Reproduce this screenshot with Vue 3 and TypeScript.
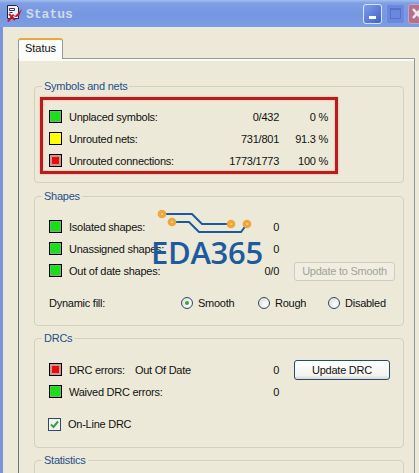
<script setup lang="ts">
interface Row { color: string; label: string; value: string; pct: string }
const nets: Row[] = [
  { color: 'green', label: 'Unplaced symbols:', value: '0/432', pct: '0 %' },
  { color: 'yellow', label: 'Unrouted nets:', value: '731/801', pct: '91.3 %' },
  { color: 'red', label: 'Unrouted connections:', value: '1773/1773', pct: '100 %' },
]
const shapes = [
  { label: 'Isolated shapes:', value: '0' },
  { label: 'Unassigned shapes:', value: '0' },
  { label: 'Out of date shapes:', value: '0/0' },
]
const fills = [
  { label: 'Smooth', on: true, w: 77 },
  { label: 'Rough', on: false, w: 70 },
  { label: 'Disabled', on: false, w: 70 },
]
</script>

<template>
  <div class="window">
    <header class="titlebar">
      <svg class="appicon" width="17" height="17" viewBox="0 0 17 17">
        <path d="M1.5 .5h9l2 2v11h-11z" fill="#f2f2f6" stroke="#23234a" />
        <path d="M3.5 3.500h5v2h-5zM3.500 7.500h3" fill="none" stroke="#35356a" />
        <path d="M1 16l6-7 2 2 7-7-3 7-3 1-3-1-4 6z" fill="#c2162a" />
        <path d="M3 9l6 6" stroke="#c2162a" stroke-width="2" />
      </svg>
      <span class="title">Status</span>
      <div class="winbtns">
        <span class="wb min"><i></i></span>
        <span class="wb max"><i></i></span>
        <span class="wb close"><svg width="11" height="14" viewBox="0 0 11 14"><path d="M1 2l8 9M9 2l-8 9" stroke="#f2e6ea" stroke-width="2.6" fill="none" /></svg></span>
      </div>
    </header>

    <main class="client">
      <div class="tab">Status</div>
      <section class="page">
        <fieldset class="group g1">
          <legend>Symbols and nets</legend>
          <div class="highlight">
            <div v-for="r in nets" :key="r.label" class="row">
              <span class="led" :class="r.color"></span>
              <span class="label">{{ r.label }}</span>
              <span class="value">{{ r.value }}</span>
              <span class="pct">{{ r.pct }}</span>
            </div>
          </div>
        </fieldset>

        <fieldset class="group g2">
          <legend>Shapes</legend>
          <div v-for="s in shapes" :key="s.label" class="row">
            <span class="led green"></span>
            <span class="label">{{ s.label }}</span>
            <span class="value">{{ s.value }}</span>
            <button v-if="s.value === '0/0'" class="btn disabled" disabled>Update to Smooth</button>
          </div>
          <div class="fillrow">
            <span class="filllabel">Dynamic fill:</span>
            <label v-for="f in fills" :key="f.label" class="radio" :style="{ width: f.w + 'px' }">
              <span class="dot" :class="{ on: f.on }"></span>{{ f.label }}
            </label>
          </div>
          <div class="mark">
            <svg class="traces" width="100" height="32" viewBox="0 0 100 32">
              <path d="M9 6H39L49 16H78M19 14H36L46 24H88L94 16" fill="none" stroke="#1a5a9e" stroke-width="2" />
              <g fill="#f8eed6" stroke="#f0a63c" stroke-width="3.500">
                <circle cx="9" cy="6" r="2.600" />
                <circle cx="19" cy="14" r="2.600" />
                <circle cx="78" cy="16" r="2.600" />
                <circle cx="94" cy="16" r="2.600" />
              </g>
            </svg>
            <span class="markname">EDA365</span>
          </div>
        </fieldset>

        <fieldset class="group g3">
          <legend>DRCs</legend>
          <div class="row">
            <span class="led red"></span>
            <span class="label drclabel"><span>DRC errors:</span><span>Out Of Date</span></span>
            <span class="value">0</span>
            <button class="btn">Update DRC</button>
          </div>
          <div class="row">
            <span class="led green"></span>
            <span class="label">Waived DRC errors:</span>
            <span class="value">0</span>
          </div>
          <label class="check">
            <span class="box">
              <svg width="9" height="9" viewBox="0 0 9 9"><path d="M1 4.5l2.500 2.500L8 1.500" fill="none" stroke="#3f9a46" stroke-width="2" /></svg>
            </span>
            On-Line DRC
          </label>
        </fieldset>

        <fieldset class="group g4">
          <legend>Statistics</legend>
        </fieldset>
      </section>
    </main>
  </div>
</template>

<style>
html, body { margin: 0; padding: 0; overflow: hidden; }
</style>

<style scoped>
.window {
  width: 419px;
  height: 473px;
  overflow: hidden;
  display: flex;
  flex-direction: column;
  background: #ece9d8;
  font-family: "Liberation Sans", Arial, sans-serif;
  font-size: 11px;
  letter-spacing: -0.25px;
  color: #111;
}
.titlebar {
  flex: none;
  height: 27px;
  box-sizing: border-box;
  display: flex;
  align-items: center;
  padding: 0 0 0 6px;
  background: linear-gradient(#a5bdee 0, #7f9fe4 12%, #7596e0 55%, #7c9ee6 100%);
}
.appicon { flex: none; }
.title {
  margin-left: 3px;
  padding-top: 2px;
  font-family: "Liberation Mono", monospace;
  font-weight: 700;
  font-size: 13px;
  letter-spacing: 0;
  color: #d0dae8;
}
.winbtns { margin-left: auto; display: flex; gap: 3px; margin-right: -8px; }
.wb {
  width: 19px;
  height: 20px;
  box-sizing: border-box;
  border-radius: 3px;
  display: flex;
  align-items: center;
  justify-content: center;
}
.wb.min { background: linear-gradient(135deg, #7f9cec, #3f63c8); border: 1px solid #dbe4f8; margin-right: 1px; }
.wb.min i { width: 7px; height: 3px; background: #fff; margin-top: 7px; margin-right: 1px; }
.wb.max { background: #6a88de; border: 1px solid #7f9ce4; }
.wb.max i { width: 9px; height: 8px; border: 1px solid #5673c8; border-top-width: 2px; }
.wb.close { background: #b4708e; border: 1px solid #c9a4bc; justify-content: flex-start; padding-left: 3px; }

.client {
  flex: 1;
  min-height: 0;
  display: flex;
  flex-direction: column;
  border-left: 3px solid #7b93dc;
  padding: 11px 4px 0 15px;
}
.tab {
  flex: none;
  align-self: flex-start;
  width: 45px;
  height: 21px;
  box-sizing: border-box;
  background: #fcfcfa;
  border: 1px solid #919b9c;
  border-top: 2px solid #e8a93a;
  border-bottom: none;
  border-radius: 3px 3px 0 0;
  text-align: center;
  line-height: 17px;
  letter-spacing: 0;
  margin-bottom: -1px;
  position: relative;
  z-index: 1;
}
.page {
  flex: 1;
  min-height: 0;
  overflow: hidden;
  border: 1px solid #919b9c;
  border-left-color: #70757a;
  border-top-color: #9a9a9a;
  border-bottom: none;
  box-shadow: inset 0 2px 0 #fbfbf8;
  padding: 21px 10px 0 15px;
  display: flex;
  flex-direction: column;
}
.group {
  flex: none;
  margin: 0;
  padding: 0;
  min-width: 0;
  box-sizing: border-box;
  border: 1px solid #d4d0c0;
  border-radius: 4px;
  position: relative;
}
.group legend {
  margin-left: 7px;
  padding: 0 2px;
  font-size: 11px;
  line-height: 13px;
  color: #1f4f8a;
}
.g1 { height: 103px; margin-bottom: 7px; }
.g2 { height: 136px; margin-bottom: 6px; padding-top: 12px; }
.g3 { height: 116px; margin-bottom: 6px; padding-top: 13px; }
.g4 { height: 60px; }
.highlight {
  margin: 4px 65px 0 5px;
  height: 77px;
  box-sizing: border-box;
  border: 3px solid #b81c1c;
  box-shadow: 0 0 2px #e8a090, inset 0 0 2px #e8a090;
  padding: 5px 0 0 6px;
}
.g2 .row, .g3 .row { padding-left: 14px; }
.row {
  height: 22px;
  display: flex;
  align-items: center;
}
.led {
  flex: none;
  width: 13px;
  height: 13px;
  box-sizing: border-box;
  border: 1px solid #000;
  margin-right: 7px;
}
.led.green { background: #17e017; box-shadow: inset -1px -1px 0 #86a886, inset 1px 1px 0 #5fbf5f; }
.led.yellow { background: #ffff00; }
.led.red { background: #ee0808; box-shadow: inset 0 0 0 2px #c49a96; }
.label { flex: none; width: 131px; white-space: nowrap; padding-top: 1px; }
.value { flex: none; width: 79px; text-align: right; white-space: nowrap; padding-top: 1px; }
.pct { flex: none; width: 49px; text-align: right; white-space: nowrap; padding-top: 1px; }
.drclabel { display: flex; gap: 10px; }
.btn {
  flex: none;
  box-sizing: border-box;
  font: inherit;
  letter-spacing: inherit;
  color: #111;
  background: linear-gradient(#ffffff, #f4f3ee 80%, #dcd8cc);
  border: 1px solid #234a78;
  border-radius: 3px;
  padding: 0;
  margin: 2px 0 0 15px;
}
.g3 .btn { width: 96px; height: 20px; }
.btn.disabled {
  width: 101px;
  height: 19px;
  color: #a5a292;
  background: #f0eee2;
  border-color: #cfccbc;
}
.fillrow {
  display: flex;
  align-items: center;
  height: 22px;
  margin-top: 11px;
  padding-left: 14px;
}
.filllabel { width: 132px; flex: none; }
.radio { display: flex; align-items: center; flex: none; }
.dot {
  width: 12px;
  height: 12px;
  box-sizing: border-box;
  border: 1px solid #2b4a6c;
  border-radius: 50%;
  margin-right: 5px;
  background: radial-gradient(circle at 65% 65%, #fff, #dcd8cc);
  position: relative;
  flex: none;
}
.dot.on::after {
  content: "";
  position: absolute;
  left: 3px;
  top: 3px;
  width: 4px;
  height: 4px;
  border-radius: 50%;
  background: #3aa23a;
}
.check {
  display: flex;
  align-items: center;
  margin: 15px 0 0 13px;
  gap: 7px;
  height: 14px;
}
.box {
  width: 13px;
  height: 13px;
  box-sizing: border-box;
  border: 1px solid #2b4a6c;
  background: #f4f4ee;
  display: flex;
  align-items: center;
  justify-content: center;
}
.mark {
  position: absolute;
  left: 118px;
  top: 5px;
  width: 112px;
  pointer-events: none;
}
.traces { display: block; }
.markname {
  position: absolute;
  left: -2px;
  top: 28px;
  font-family: "Open Sans", sans-serif;
  font-size: 31px;
  line-height: 32px;
  font-weight: 600;
  letter-spacing: -0.3px;
  color: #1d5a9e;
}
</style>
